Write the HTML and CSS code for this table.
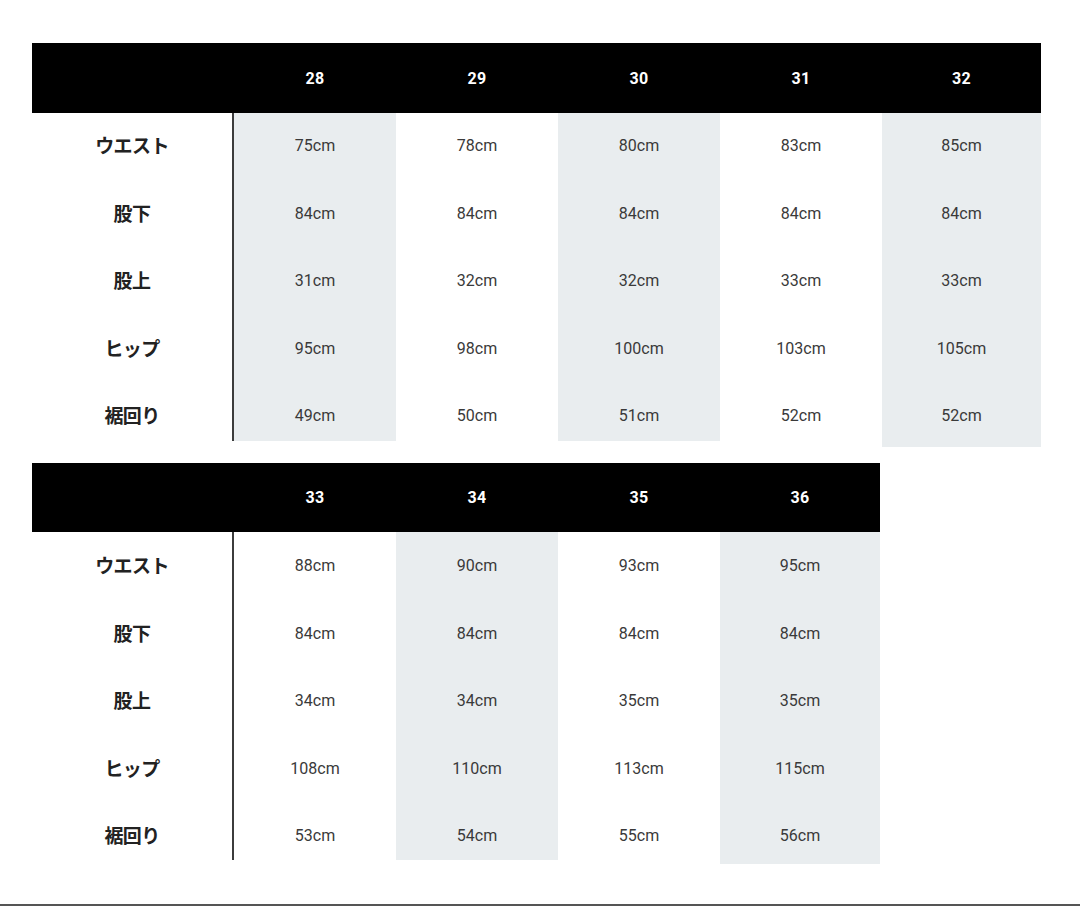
FILE: index.html
```html
<!DOCTYPE html>
<html lang="ja">
<head>
<meta charset="utf-8">
<link rel="stylesheet" href="styles.css">
</head>
<body>
<div class="page">
  <section class="chart chart-5">
    <div class="head">
      <div class="hcell"></div>
      <div class="hcell">28</div><div class="hcell">29</div><div class="hcell">30</div><div class="hcell">31</div><div class="hcell">32</div>
    </div>
    <div class="body">
      <div class="col labels">
        <div class="cell">ウエスト</div><div class="cell">股下</div><div class="cell">股上</div><div class="cell">ヒップ</div><div class="cell">裾回り</div>
      </div>
      <div class="col shade"><div class="cell">75cm</div><div class="cell">84cm</div><div class="cell">31cm</div><div class="cell">95cm</div><div class="cell">49cm</div></div>
      <div class="col"><div class="cell">78cm</div><div class="cell">84cm</div><div class="cell">32cm</div><div class="cell">98cm</div><div class="cell">50cm</div></div>
      <div class="col shade"><div class="cell">80cm</div><div class="cell">84cm</div><div class="cell">32cm</div><div class="cell">100cm</div><div class="cell">51cm</div></div>
      <div class="col"><div class="cell">83cm</div><div class="cell">84cm</div><div class="cell">33cm</div><div class="cell">103cm</div><div class="cell">52cm</div></div>
      <div class="col shade tall"><div class="cell">85cm</div><div class="cell">84cm</div><div class="cell">33cm</div><div class="cell">105cm</div><div class="cell">52cm</div></div>
    </div>
  </section>

  <section class="chart chart-4">
    <div class="head">
      <div class="hcell"></div>
      <div class="hcell">33</div><div class="hcell">34</div><div class="hcell">35</div><div class="hcell">36</div>
    </div>
    <div class="body">
      <div class="col labels">
        <div class="cell">ウエスト</div><div class="cell">股下</div><div class="cell">股上</div><div class="cell">ヒップ</div><div class="cell">裾回り</div>
      </div>
      <div class="col"><div class="cell">88cm</div><div class="cell">84cm</div><div class="cell">34cm</div><div class="cell">108cm</div><div class="cell">53cm</div></div>
      <div class="col shade"><div class="cell">90cm</div><div class="cell">84cm</div><div class="cell">34cm</div><div class="cell">110cm</div><div class="cell">54cm</div></div>
      <div class="col"><div class="cell">93cm</div><div class="cell">84cm</div><div class="cell">35cm</div><div class="cell">113cm</div><div class="cell">55cm</div></div>
      <div class="col shade tall"><div class="cell">95cm</div><div class="cell">84cm</div><div class="cell">35cm</div><div class="cell">115cm</div><div class="cell">56cm</div></div>
    </div>
  </section>
</div>
<div class="rule"></div>
</body>
</html>
```

FILE: styles.css
```css
html, body {
  margin: 0;
  padding: 0;
  background: #ffffff;
}

body {
  width: 1080px;
  height: 906px;
  overflow: hidden;
  position: relative;
  font-family: Roboto, "Noto Sans CJK JP", sans-serif;
}

.page {
  padding: 43px 0 0 32px;
  display: flex;
  flex-direction: column;
  gap: 16px;
}

.chart-5 { --cols: 202px 162px 162px 162px 162px 159px; }
.chart-4 { --cols: 202px 162px 162px 162px 160px; }

.head {
  display: grid;
  grid-template-columns: var(--cols);
  width: max-content;
  height: 70px;
  background: #000;
}

.chart-4 .head { height: 69px; }

.hcell {
  display: flex;
  align-items: center;
  justify-content: center;
  color: #fff;
  font-weight: 700;
  font-size: 16px;
  letter-spacing: 0.2px;
}

.body {
  display: grid;
  grid-template-columns: var(--cols);
  width: max-content;
  align-items: start;
}

.col {
  display: flex;
  flex-direction: column;
}

.shade { background: #e9edef; }
.tall { padding-bottom: 6px; }
.chart-4 .tall { padding-bottom: 4px; }

.labels {
  border-right: 2px solid #3c3c3c;
}

.cell {
  height: 67.5px;
  box-sizing: border-box;
  padding-top: 23px;
  line-height: 20px;
  text-align: center;
  font-size: 16px;
  color: #3a3a3a;
}

.chart-4 .cell { padding-top: 24px; }

.cell:last-child { height: 58px; }

.labels .cell,
.chart-4 .labels .cell {
  padding-top: 22px;
  font-family: "Noto Sans CJK JP", sans-serif;
  font-weight: 700;
  font-size: 19px;
  color: #222;
  letter-spacing: -0.6px;
}

.chart-4 .labels .cell { padding-top: 23px; }

.rule {
  position: absolute;
  left: 0;
  right: 0;
  bottom: 0;
  height: 2px;
  background: #555;
}
```
